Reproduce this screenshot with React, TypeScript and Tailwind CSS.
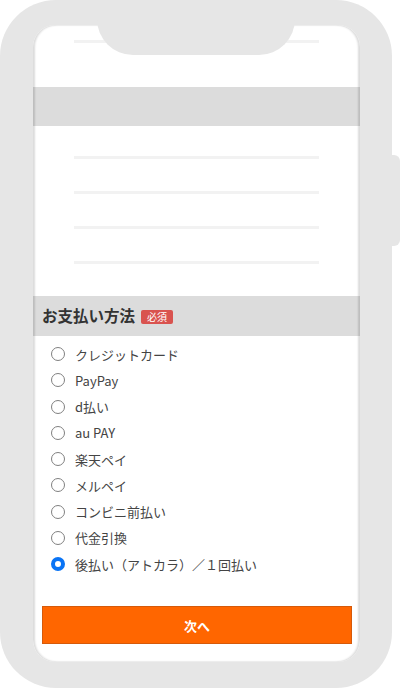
import React from 'react';

const methods = [
  'クレジットカード',
  'PayPay',
  'd払い',
  'au PAY',
  '楽天ペイ',
  'メルペイ',
  'コンビニ前払い',
  '代金引換',
  '後払い（アトカラ）／１回払い',
];

const font = { fontFamily: '"Noto Sans CJK JP", "Noto Sans", sans-serif' };

export default function App() {
  return (
    <div className="relative w-[400px] h-[689px] bg-white overflow-hidden" style={font}>
      {/* side button */}
      <div className="absolute left-[390px] top-[155px] w-[10px] h-[91px] rounded-r-[6px] bg-[#e6e6e6]" />

      {/* phone frame */}
      <div className="relative w-[392px] h-[688px] rounded-[56px] bg-[#e6e6e6] pt-[25px] pl-[33px] pr-[32px] pb-[26px]">
        {/* screen */}
        <div className="relative h-full bg-white rounded-[22px] overflow-hidden">
          {/* previous section tail */}
          <div className="pt-[15px] pb-[44px] px-[41px]">
            <div className="h-[3px] bg-[#f2f2f2]" />
          </div>
          <div className="h-[39px] bg-[#dcdcdc]" />
          <div className="flex flex-col gap-[32px] pt-[30px] pb-[32px] px-[41px]">
            <div className="h-[3px] bg-[#f2f2f2]" />
            <div className="h-[3px] bg-[#f2f2f2]" />
            <div className="h-[3px] bg-[#f2f2f2]" />
            <div className="h-[3px] bg-[#f2f2f2]" />
          </div>

          {/* payment */}
          <div className="h-[40px] bg-[#dcdcdc] flex items-center pl-[9px]">
            <span className="text-[15.5px] font-bold text-[#333333] leading-none">お支払い方法</span>
            <span className="ml-[6px] mt-[1px] px-[6px] h-[14px] flex items-center rounded-[2px] bg-[#d9534f] text-white text-[10px] leading-none">
              必須
            </span>
          </div>

          <ul className="pt-[5px] pl-[18px]">
            {methods.map((m, i) => {
              const checked = i === methods.length - 1;
              return (
                <li key={m} className="h-[26.25px] flex items-center">
                  {checked ? (
                    <span className="w-[14px] h-[14px] rounded-full border-[4.5px] border-[#0a74f5] bg-white" />
                  ) : (
                    <span className="w-[14px] h-[14px] rounded-full border-[1.5px] border-[#808080] bg-white" />
                  )}
                  <span className="ml-[10px] text-[13px] text-[#444444] leading-none">{m}</span>
                </li>
              );
            })}
          </ul>

          <div className="mt-[29px] ml-[9px] mr-[8px]">
            <button className="w-full h-[38px] bg-[#ff6600] border border-[#d65a0a] text-white text-[13px] font-bold">
              次へ
            </button>
          </div>

          {/* edge shading */}
          <div className="pointer-events-none absolute inset-0 rounded-[22px] shadow-[inset_2px_0_2px_rgba(0,0,0,0.14),inset_-2px_0_2px_rgba(0,0,0,0.14)]" />
        </div>

        {/* notch */}
        <div className="absolute left-[97px] top-0 w-[198px] h-[55px] rounded-b-[36px] bg-[#e6e6e6]" />
      </div>
    </div>
  );
}
